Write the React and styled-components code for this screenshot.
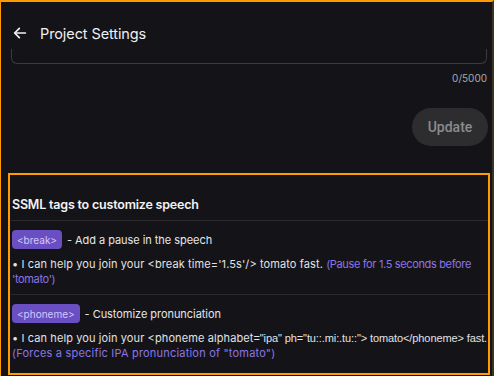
import React from 'react';
import styled, { createGlobalStyle } from 'styled-components';

const GlobalStyle = createGlobalStyle`
  html, body {
    margin: 0;
    padding: 0;
    background: #141418;
  }
  * {
    box-sizing: border-box;
  }
`;

const Frame = styled.div`
  width: 494px;
  height: 376px;
  overflow: hidden;
  background: #141418;
  border-top: 2px solid #ff9a00;
  border-left: 1px solid #ff9a00;
  border-right: 2px solid #3a3222;
  font-family: Inter, 'Noto Sans', sans-serif;
  color: #e9e9ec;
  display: flex;
  flex-direction: column;
`;

const Header = styled.div`
  display: flex;
  align-items: center;
  gap: 12px;
  height: 47px;
  padding: 15px 0 0 11px;
`;

const Title = styled.h1`
  margin: 0;
  font-size: 14.5px;
  font-weight: 400;
  letter-spacing: -0.1px;
  color: #f0f0f2;
`;

const TextareaStub = styled.div`
  margin: 0 5px 0 10px;
  height: 15px;
  border: 1px solid #3a3a3f;
  border-top: none;
  border-radius: 0 0 6px 6px;
`;

const Counter = styled.div`
  text-align: right;
  padding-right: 5px;
  margin-top: 8px;
  font-size: 10px;
  color: #a9a9ae;
`;

const ButtonRow = styled.div`
  display: flex;
  justify-content: flex-end;
  padding-right: 4px;
  margin-top: 24px;
`;

const UpdateButton = styled.button`
  width: 76px;
  height: 38px;
  border: none;
  border-radius: 19px;
  background: #2d2d30;
  color: #8b8b8f;
  font-family: Roboto, 'Liberation Sans', sans-serif;
  font-size: 14px;
  font-weight: 500;
`;

const TagsPanel = styled.section`
  flex: 1;
  margin: 27px 2px 1px 7px;
  border: 2px solid #ff9a00;
  padding: 0 0 0 1px;
`;

const PanelTitle = styled.h2`
  margin: 0;
  padding: 22px 0 0 1px;
  height: 46px;
  font-size: 12.5px;
  font-weight: 600;
  letter-spacing: -0.2px;
  color: #f2f2f4;
  border-bottom: 1px solid #2a2a2f;
`;

const TagBlock = styled.div`
  padding: 9px 0 7px 1px;
  border-bottom: ${({ $last }) => ($last ? 'none' : '1px solid #2a2a2f')};
`;

const TagLine = styled.div`
  display: flex;
  align-items: center;
  gap: 5px;
  font-size: 11px;
  letter-spacing: -0.05px;
  color: #e6e6ea;
`;

const Chip = styled.span`
  display: inline-flex;
  align-items: center;
  height: 19px;
  padding: 0 5px;
  border-radius: 4px;
  background: #6a4fc2;
  color: #d4c8ff;
  font-size: 10px;
  letter-spacing: 0;
`;

const Example = styled.p`
  margin: 8px 0 0;
  font-size: 11px;
  line-height: 15px;
  letter-spacing: 0.1px;
  color: #e2e2e6;
`;

const Code = styled.span`
  font-family: 'Liberation Sans', Arial, sans-serif;
  letter-spacing: -0.1px;
`;

const Note = styled.span`
  color: #8c74e6;
  letter-spacing: ${({ $tight }) => ($tight ? '-0.35px' : '0.2px')};
`;

function BackArrow() {
  return (
    <svg width="16" height="16" viewBox="0 0 24 24" fill="none" stroke="#f2f2f4" strokeWidth="2.6" strokeLinecap="round" strokeLinejoin="round">
      <path d="M20 12H5" />
      <path d="M11 5l-7 7 7 7" />
    </svg>
  );
}

export default function App() {
  return (
    <>
      <GlobalStyle />
      <Frame>
        <Header>
          <BackArrow />
          <Title>Project Settings</Title>
        </Header>
        <TextareaStub />
        <Counter>0/5000</Counter>
        <ButtonRow>
          <UpdateButton>Update</UpdateButton>
        </ButtonRow>
        <TagsPanel>
          <PanelTitle>SSML tags to customize speech</PanelTitle>
          <TagBlock>
            <TagLine>
              <Chip>&lt;break&gt;</Chip>- Add a pause in the speech
            </TagLine>
            <Example>
              • I can help you join your &lt;break time='1.5s'/&gt; tomato fast.{' '}
              <Note $tight>(Pause for 1.5 seconds before 'tomato')</Note>
            </Example>
          </TagBlock>
          <TagBlock $last>
            <TagLine>
              <Chip>&lt;phoneme&gt;</Chip>- Customize pronunciation
            </TagLine>
            <Example>
              • I can help you join your &lt;phoneme alphabet
              <Code>="ipa" ph="tu::.mi:.tu::"&gt; tomato&lt;/phoneme&gt; fast.</Code>{' '}
              <Note>(Forces a specific IPA pronunciation of "tomato")</Note>
            </Example>
          </TagBlock>
        </TagsPanel>
      </Frame>
    </>
  );
}
